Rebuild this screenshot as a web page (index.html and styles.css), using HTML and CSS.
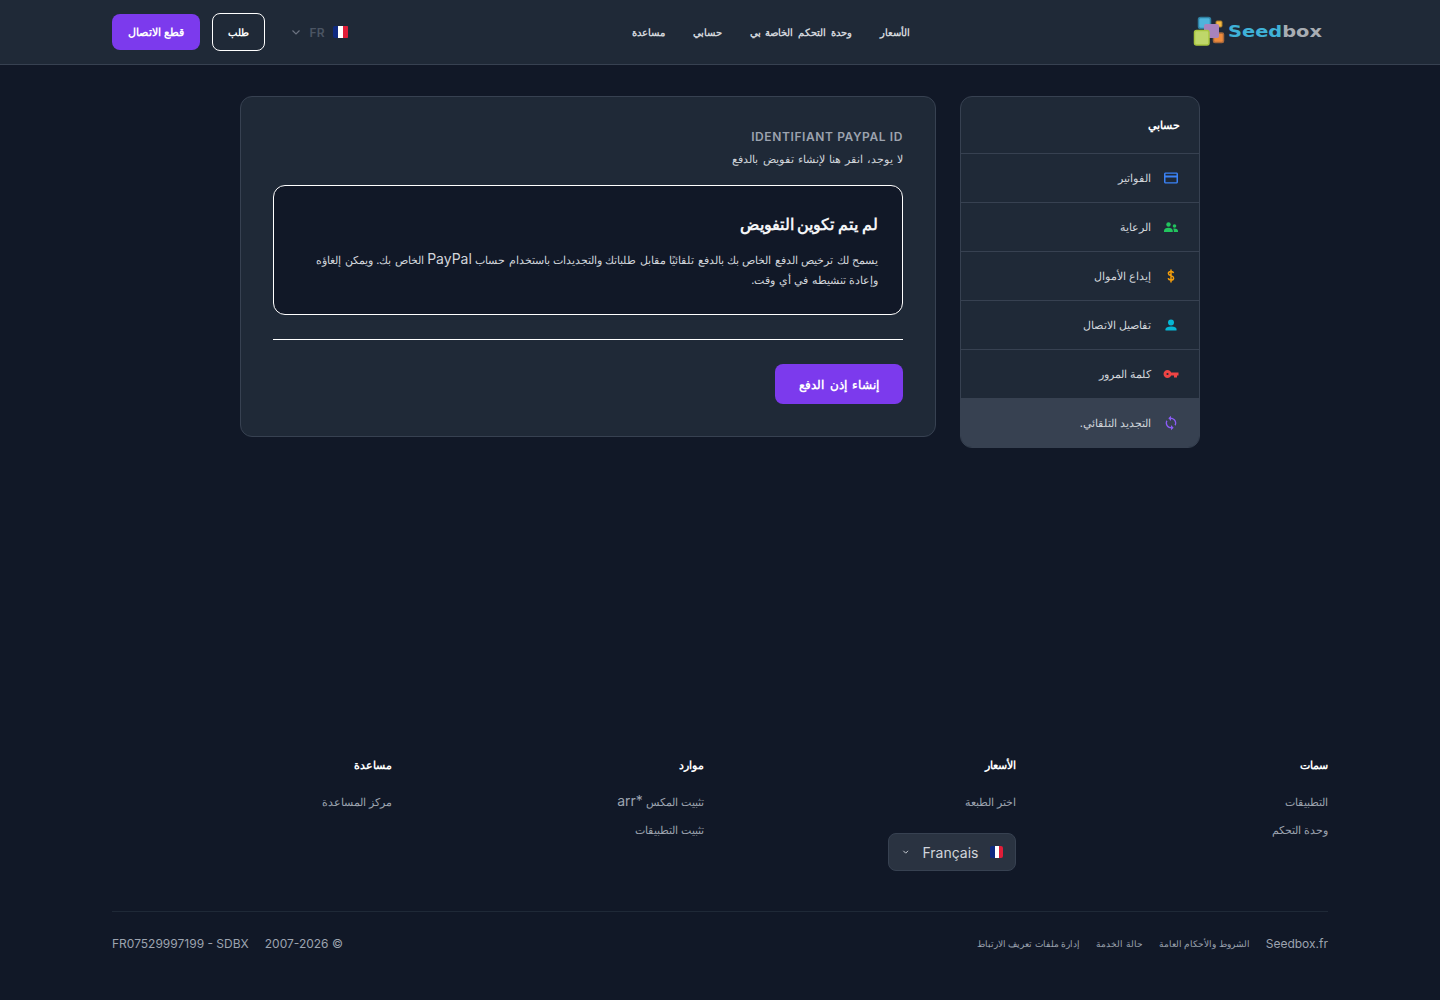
FILE: index.html
```html
<!DOCTYPE html>
<html lang="ar" dir="rtl">
<head>
  <meta charset="UTF-8" />
  <meta name="viewport" content="width=device-width, initial-scale=1.0"/>
  <title>Seedbox</title>
  <link rel="stylesheet" href="styles.css">
</head>
<body>
  <header class="topbar">
    <a class="logo" href="#">
      <svg width="36" height="32" viewBox="0 0 36 32" class="logo-mark">
        <rect x="5.500" y="1.500" width="12" height="11" rx="2" fill="#4fb4dc" stroke="#2f7fa0" stroke-width="1.500"/>
        <rect x="23" y="5" width="6" height="6" rx="1" fill="#f5b942" stroke="#a87a2a"/>
        <rect x="20.500" y="17" width="10" height="9.500" rx="1.500" fill="#ee8a3c" stroke="#a8683a" stroke-width="1.500"/>
        <rect x="11" y="8" width="15" height="14" rx="2" fill="#a883bd"/>
        <rect x="1.500" y="14.500" width="14.500" height="14.500" rx="2" fill="#bfd76a" stroke="#a9c63f" stroke-width="1.500"/>
      </svg>
      <svg width="97" height="32" viewBox="0 0 97 32" class="logo-word">
        <text x="0" y="21" textLength="94" lengthAdjust="spacingAndGlyphs" direction="ltr"><tspan class="logo-seed">Seed</tspan><tspan class="logo-box">box</tspan></text>
      </svg>
    </a>
    <nav class="nav">
      <a href="#">الأسعار</a>
      <a href="#">وحدة التحكم الخاصة بي</a>
      <a href="#">حسابي</a>
      <a href="#">مساعدة</a>
    </nav>
    <div class="actions">
      <div class="lang-mini">
        <span class="flag"><i class="b"></i><i class="w"></i><i class="r"></i></span>
        <span>FR</span>
        <svg width="12" height="12" viewBox="0 0 12 12" class="chev"><path d="M2.500 4.500 6 8 9.500 4.500" fill="none" stroke="currentColor" stroke-width="1.200"/></svg>
      </div>
      <a class="btn-outline" href="#">طلب</a>
      <a class="btn-primary" href="#">قطع الاتصال</a>
    </div>
  </header>

  <main class="page">
    <aside class="side">
      <div class="side-title">حسابي</div>
      <a class="side-row" href="#">
        <svg class="ico" viewBox="0 0 16 16"><path fill="#3b82f6" d="M2.500 2.500h11c.8 0 1.500.7 1.500 1.500v8c0 .8-.7 1.500-1.500 1.500h-11C1.700 13.500 1 12.800 1 12V4c0-.8.7-1.500 1.500-1.500Zm0 1.300V5.500h11V3.800h-11Zm0 3.700v4.700h11V7.500h-11Z"/></svg>
        <span>الفواتير</span>
      </a>
      <a class="side-row" href="#">
        <svg class="ico" viewBox="0 0 16 16"><g fill="#22c55e"><circle cx="5.500" cy="5.500" r="2.200"/><circle cx="11.500" cy="7" r="1.800"/><path d="M1 13v-1.200C1 10 3 8.800 5.500 8.800s4 1.200 4.300 3V13H1Z"/><path d="M10.800 13v-1.400c0-.8-.3-1.400-.7-1.800.5-.2 1-.3 1.500-.3 2 0 3.400.9 3.400 2.400V13h-4.200Z"/></g></svg>
        <span>الرعاية</span>
      </a>
      <a class="side-row" href="#">
        <svg class="ico" viewBox="0 0 16 16"><path fill="none" stroke="#f59e0b" stroke-width="1.500" d="M10.500 5.200C10.300 4 9.300 3.500 8 3.500c-1.500 0-2.600.7-2.600 2 0 2.800 5.200 1.500 5.200 4.400 0 1.400-1.200 2.100-2.600 2.100-1.500 0-2.500-.7-2.700-1.900M8 1.500v13"/></svg>
        <span>إيداع الأموال</span>
      </a>
      <a class="side-row" href="#">
        <svg class="ico" viewBox="0 0 16 16"><g fill="#06b6d4"><circle cx="8" cy="5.500" r="3"/><path d="M2.500 13.500v-1.300C2.500 10.300 5 9.500 8 9.500s5.500.8 5.500 2.700v1.300h-11Z"/></g></svg>
        <span>تفاصيل الاتصال</span>
      </a>
      <a class="side-row" href="#">
        <svg class="ico" viewBox="0 0 16 16"><path fill="#ef4444" d="M4.500 4C6.200 4 7.600 5 8.100 6.500H15.500V9.500H14V11.500H11V9.500H8.100C7.600 11 6.200 12 4.500 12 2.300 12 .5 10.200 .5 8S2.300 4 4.500 4Zm0 2.900a1.100 1.100 0 1 0 0 2.200 1.100 1.100 0 0 0 0-2.200Z"/></svg>
        <span>كلمة المرور</span>
      </a>
      <a class="side-row active" href="#">
        <svg class="ico" viewBox="0 0 24 24"><path fill="#8b5cf6" d="M12 4V1L8 5l4 4V6c3.310 0 6 2.690 6 6 0 1.010-.25 1.970-.7 2.800l1.460 1.460C19.540 15.030 20 13.570 20 12c0-4.420-3.580-8-8-8zm0 14c-3.310 0-6-2.690-6-6 0-1.010.25-1.970.7-2.800L5.240 7.740C4.460 8.970 4 10.430 4 12c0 4.420 3.580 8 8 8v3l4-4-4-4v3z"/></svg>
        <span>التجديد التلقائي.</span>
      </a>
    </aside>

    <section class="card">
      <div class="label">IDENTIFIANT PAYPAL ID</div>
      <p class="hint">لا يوجد، انقر هنا لإنشاء تفويض بالدفع</p>
      <div class="notice">
        <h2>لم يتم تكوين التفويض</h2>
        <p>يسمح لك ترخيص الدفع الخاص بك بالدفع تلقائيًا مقابل طلباتك والتجديدات باستخدام حساب <span class="latin">PayPal</span> الخاص بك. ويمكن إلغاؤه وإعادة تنشيطه في أي وقت.</p>
      </div>
      <hr class="rule">
      <a class="btn-primary btn-big" href="#">إنشاء إذن الدفع</a>
    </section>
  </main>

  <footer class="footer">
    <div class="foot-grid">
      <div class="foot-col">
        <h4>سمات</h4>
        <a href="#">التطبيقات</a>
        <a href="#">وحدة التحكم</a>
      </div>
      <div class="foot-col">
        <h4>الأسعار</h4>
        <a href="#">اختر الطبعة</a>
        <div class="lang-select">
          <span class="flag"><i class="b"></i><i class="w"></i><i class="r"></i></span>
          <span class="lang-name">Français</span>
          <svg width="12" height="12" viewBox="0 0 12 12" class="chev"><path d="M3 4.500 6 7.500 9 4.500" fill="none" stroke="currentColor" stroke-width="1.200"/></svg>
        </div>
      </div>
      <div class="foot-col">
        <h4>موارد</h4>
        <a href="#">تثبيت المكس <span class="latin">*arr</span></a>
        <a href="#">تثبيت التطبيقات</a>
      </div>
      <div class="foot-col">
        <h4>مساعدة</h4>
        <a href="#">مركز المساعدة</a>
      </div>
    </div>
    <div class="foot-bottom">
      <div class="foot-links">
        <span class="brand">Seedbox.fr</span>
        <a href="#">الشروط والأحكام العامة</a>
        <a href="#">حالة الخدمة</a>
        <a href="#">إدارة ملفات تعريف الارتباط</a>
      </div>
      <div class="foot-legal">
        <span>© 2007-2026</span>
        <span dir="ltr">FR07529997199 - SDBX</span>
      </div>
    </div>
  </footer>
</body>
</html>
```

FILE: styles.css
```css
* { box-sizing: border-box; }
body {
  margin: 0;
  background-color: #111827;
  color: #d1d5db;
  font-family: Inter, sans-serif;
  font-size: 11px;
}
a { color: inherit; text-decoration: none; }
.latin { font-size: 14px; line-height: 1; }

.topbar {
  height: 65px;
  padding: 0 112px;
  display: flex;
  align-items: center;
  justify-content: space-between;
  background-color: #1f2937;
  border-bottom: 1px solid #374151;
}
.logo {
  width: 135px;
  display: flex;
  direction: ltr;
  align-items: center;
}
.logo-mark { flex: none; }
.logo-word { flex: none; margin-left: -1px; }
.logo-word text {
  font-family: "DejaVu Sans", sans-serif;
  font-size: 15px;
  font-weight: bold;
}
.logo-seed { fill: #3fb2d8; }
.logo-box { fill: #a8adb3; }

.nav {
  display: flex;
  gap: 28px;
}
.nav a {
  color: #d1d5db;
  font-size: 10px;
  font-weight: 600;
  letter-spacing: 1px;
  word-spacing: 2px;
}

.actions {
  display: flex;
  align-items: center;
  gap: 12px;
}
.lang-mini {
  display: flex;
  align-items: center;
  gap: 8px;
  margin-left: 13px;
  color: #4b5563;
  font-size: 12px;
  font-weight: 600;
}
.chev { color: #6b7280; }
.flag {
  width: 16px;
  height: 12px;
  display: flex;
  direction: ltr;
  border-radius: 2px;
  overflow: hidden;
}
.flag i { flex: 1; }
.flag .b { background-color: #0f2a80; }
.flag .w { background-color: #ffffff; }
.flag .r { background-color: #e11d38; }

.btn-primary {
  height: 36px;
  padding: 0 16px;
  display: inline-flex;
  align-items: center;
  background-color: #7c3aed;
  color: #fff;
  border-radius: 8px;
  font-weight: 700;
  font-size: 11px;
}
.btn-outline {
  height: 38px;
  padding: 0 15px;
  display: inline-flex;
  align-items: center;
  color: #fff;
  border: 1px solid #fff;
  border-radius: 8px;
  font-size: 10px;
  font-weight: 700;
}
.btn-big {
  height: 40px;
  padding: 0 24px;
  font-size: 12px;
  word-spacing: 2.5px;
}

.page {
  min-height: 645px;
  padding-top: 31px;
  display: flex;
  justify-content: center;
  align-items: flex-start;
  gap: 24px;
}
.side {
  width: 240px;
  background-color: #1f2937;
  border: 1px solid #374151;
  border-radius: 12px;
  overflow: hidden;
}
.side-title {
  height: 56px;
  padding: 0 19px;
  display: flex;
  align-items: center;
  color: #fff;
  font-weight: 700;
}
.side-row {
  height: 49px;
  padding: 0 20px;
  display: flex;
  align-items: center;
  gap: 12px;
  border-top: 1px solid #374151;
}
.side-row.active {
  background-color: #374151;
  border-top-color: #374151;
}
.ico { width: 16px; height: 16px; flex: none; }

.card {
  width: 696px;
  padding: 32px;
  background-color: #1f2937;
  border: 1px solid #374151;
  border-radius: 12px;
}
.label {
  color: #9ca3af;
  font-size: 12px;
  font-weight: 600;
  letter-spacing: 0.6px;
  line-height: 16px;
}
.hint {
  margin: 6px 0 0;
  line-height: 16px;
  word-spacing: 1px;
}
.notice {
  margin-top: 18px;
  padding: 24px;
  background-color: #111827;
  border: 1px solid #fff;
  border-radius: 12px;
}
.notice h2 {
  margin: 0 0 12px;
  color: #f3f4f6;
  font-size: 16px;
  line-height: 28px;
  font-weight: 700;
}
.notice p {
  margin: 0;
  line-height: 20px;
  word-spacing: 0.3px;
}
.rule {
  margin: 24px 0;
  border: 0;
  border-top: 1px solid #fff;
}

.footer {
  padding: 48px 112px 0;
}
.foot-grid {
  display: grid;
  grid-template-columns: repeat(4, 1fr);
  gap: 32px;
  padding-bottom: 40px;
  border-bottom: 1px solid #1f2937;
}
.foot-col {
  display: flex;
  flex-direction: column;
  align-items: flex-start;
  gap: 8px;
  min-height: 113px;
}
.foot-col h4 {
  margin: 0 0 10px;
  color: #fff;
  font-size: 10.5px;
  line-height: 16px;
  font-weight: 700;
}
.foot-col a {
  color: #9ca3af;
  line-height: 20px;
}
.lang-select {
  width: 128px;
  height: 38px;
  margin-top: 13px;
  padding: 0 12px;
  display: flex;
  align-items: center;
  gap: 8px;
  background-color: #2a3341;
  color: #d1d5db;
  border: 1px solid #374151;
  border-radius: 8px;
  font-size: 14px;
}
.lang-select .chev { color: #d1d5db; }
.lang-name { margin: 0 4px; }
.foot-bottom {
  padding-top: 24px;
  display: flex;
  justify-content: space-between;
  line-height: 16px;
  color: #9ca3af;
  font-size: 12px;
}
.foot-links {
  display: flex;
  align-items: center;
  gap: 16px;
}
.foot-links a { font-size: 9px; }
.foot-legal {
  display: flex;
  gap: 16px;
}
```
